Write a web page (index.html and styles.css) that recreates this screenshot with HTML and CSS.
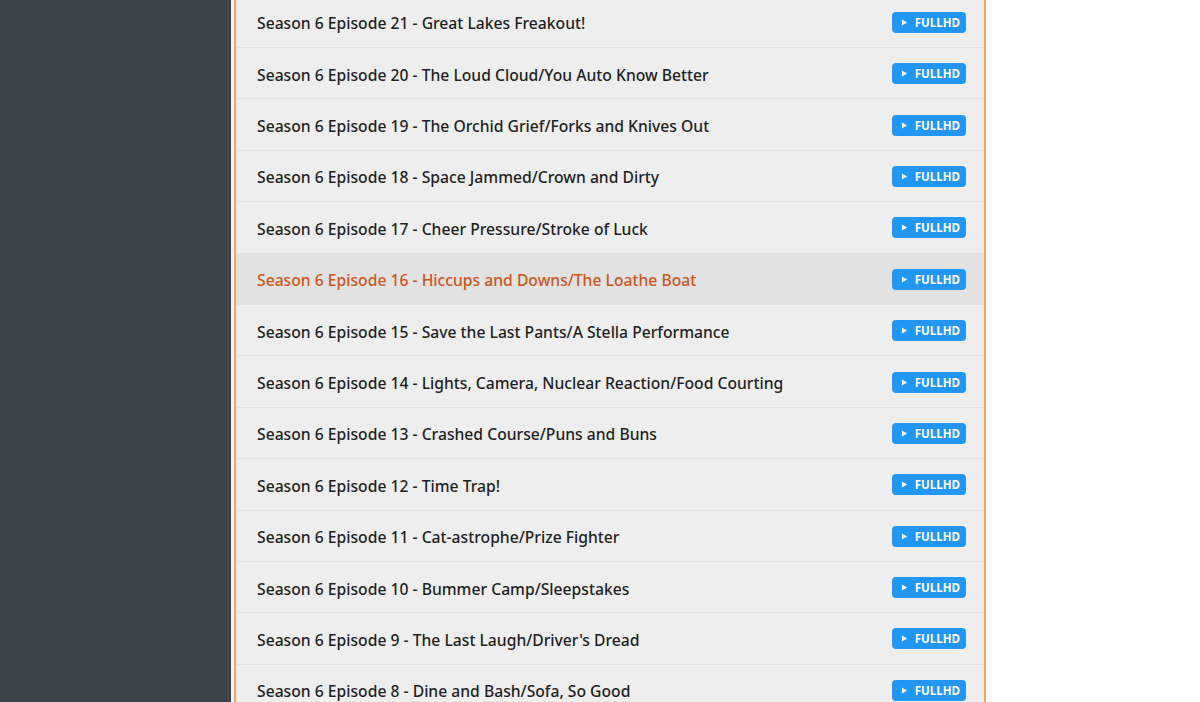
FILE: index.html
```html
<!DOCTYPE html>
<html>
<head>
<meta charset="utf-8">
<link rel="stylesheet" href="styles.css">
</head>
<body>
<div class="layout">
  <aside class="sidebar"></aside>
  <main class="main">
    <ul class="episodes">
      <li class="ep"><a class="ep-title">Season 6 Episode 21 - Great Lakes Freakout!</a><span class="badge"><svg viewBox="0 0 8 8" class="play"><path d="M1 0.5 L7 4 L1 7.5 Z"/></svg>FULLHD</span></li>
      <li class="ep"><a class="ep-title">Season 6 Episode 20 - The Loud Cloud/You Auto Know Better</a><span class="badge"><svg viewBox="0 0 8 8" class="play"><path d="M1 0.5 L7 4 L1 7.5 Z"/></svg>FULLHD</span></li>
      <li class="ep"><a class="ep-title">Season 6 Episode 19 - The Orchid Grief/Forks and Knives Out</a><span class="badge"><svg viewBox="0 0 8 8" class="play"><path d="M1 0.5 L7 4 L1 7.5 Z"/></svg>FULLHD</span></li>
      <li class="ep"><a class="ep-title">Season 6 Episode 18 - Space Jammed/Crown and Dirty</a><span class="badge"><svg viewBox="0 0 8 8" class="play"><path d="M1 0.5 L7 4 L1 7.5 Z"/></svg>FULLHD</span></li>
      <li class="ep"><a class="ep-title">Season 6 Episode 17 - Cheer Pressure/Stroke of Luck</a><span class="badge"><svg viewBox="0 0 8 8" class="play"><path d="M1 0.5 L7 4 L1 7.5 Z"/></svg>FULLHD</span></li>
      <li class="ep active"><a class="ep-title">Season 6 Episode 16 - Hiccups and Downs/The Loathe Boat</a><span class="badge"><svg viewBox="0 0 8 8" class="play"><path d="M1 0.5 L7 4 L1 7.5 Z"/></svg>FULLHD</span></li>
      <li class="ep"><a class="ep-title">Season 6 Episode 15 - Save the Last Pants/A Stella Performance</a><span class="badge"><svg viewBox="0 0 8 8" class="play"><path d="M1 0.5 L7 4 L1 7.5 Z"/></svg>FULLHD</span></li>
      <li class="ep"><a class="ep-title">Season 6 Episode 14 - Lights, Camera, Nuclear Reaction/Food Courting</a><span class="badge"><svg viewBox="0 0 8 8" class="play"><path d="M1 0.5 L7 4 L1 7.5 Z"/></svg>FULLHD</span></li>
      <li class="ep"><a class="ep-title">Season 6 Episode 13 - Crashed Course/Puns and Buns</a><span class="badge"><svg viewBox="0 0 8 8" class="play"><path d="M1 0.5 L7 4 L1 7.5 Z"/></svg>FULLHD</span></li>
      <li class="ep"><a class="ep-title">Season 6 Episode 12 - Time Trap!</a><span class="badge"><svg viewBox="0 0 8 8" class="play"><path d="M1 0.5 L7 4 L1 7.5 Z"/></svg>FULLHD</span></li>
      <li class="ep"><a class="ep-title">Season 6 Episode 11 - Cat-astrophe/Prize Fighter</a><span class="badge"><svg viewBox="0 0 8 8" class="play"><path d="M1 0.5 L7 4 L1 7.5 Z"/></svg>FULLHD</span></li>
      <li class="ep"><a class="ep-title">Season 6 Episode 10 - Bummer Camp/Sleepstakes</a><span class="badge"><svg viewBox="0 0 8 8" class="play"><path d="M1 0.5 L7 4 L1 7.5 Z"/></svg>FULLHD</span></li>
      <li class="ep"><a class="ep-title">Season 6 Episode 9 - The Last Laugh/Driver's Dread</a><span class="badge"><svg viewBox="0 0 8 8" class="play"><path d="M1 0.5 L7 4 L1 7.5 Z"/></svg>FULLHD</span></li>
      <li class="ep"><a class="ep-title">Season 6 Episode 8 - Dine and Bash/Sofa, So Good</a><span class="badge"><svg viewBox="0 0 8 8" class="play"><path d="M1 0.5 L7 4 L1 7.5 Z"/></svg>FULLHD</span></li>
    </ul>
  </main>
</div>
</body>
</html>
```
FILE: styles.css
```css
html, body {
  margin: 0;
  padding: 0;
  background: #fff;
  height: 100%;
  overflow: hidden;
}
body {
  font-family: "Noto Sans", "Open Sans", "DejaVu Sans", sans-serif;
}
.layout {
  display: flex;
  height: 702px;
}
.sidebar {
  width: 231px;
  flex: none;
  background: #3c444c;
}
.main {
  flex: none;
  padding-left: 3px;
  background: linear-gradient(to right, #f1f1f1 3px, #fff 3px);
}
.episodes {
  list-style: none;
  margin: -3.4px 0 0 0;
  padding: 0;
  width: 748px;
  border-left: 2px solid #f4a45c;
  border-right: 2px solid #f4a45c;
  background: #eeeeee;
}
.ep {
  box-sizing: border-box;
  height: 51.4px;
  display: flex;
  align-items: center;
  justify-content: space-between;
  padding: 1px 18px 0 21px;
  border-bottom: 1px solid #e2e2e2;
}
.ep.active {
  background: #e2e2e2;
}
.ep-title {
  font-size: 15.7px;
  font-weight: 500;
  color: #1f1f1f;
  padding-top: 2px;
}
.ep.active .ep-title {
  color: #c9561a;
}
.badge {
  display: inline-flex;
  align-items: center;
  gap: 7px;
  height: 21px;
  box-sizing: border-box;
  padding: 0 6px 0 9px;
  background: #2196f3;
  border-radius: 4px;
  color: #fff;
  font-family: "Open Sans", "Noto Sans", sans-serif;
  font-weight: 700;
  font-size: 11.5px;
}
.play {
  width: 7px;
  height: 9px;
  fill: #fff;
}
```
